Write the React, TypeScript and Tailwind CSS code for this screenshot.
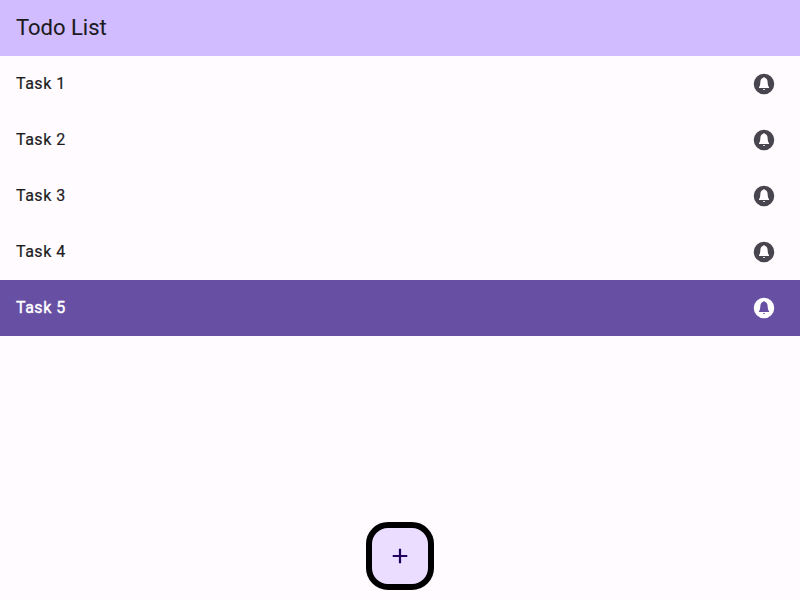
const tasks = ["Task 1", "Task 2", "Task 3", "Task 4", "Task 5"];

function BellCircle({ className }: { className: string }) {
  return (
    <svg viewBox="0 0 24 24" className={className} fill="currentColor" fillRule="evenodd">
      <path d="M12 1.75a10.25 10.25 0 1 0 0 20.5 10.25 10.25 0 0 0 0-20.5ZM12 5.300c.6 0 1 .3 1.200.7 1.500.5 2.200 1.600 2.350 3.300.15 2.100.35 3.900.75 4.900.2.300.7.4.7.9v.9H7v-.9c0-.5.5-.6.7-.9.400-1 .600-2.800.750-4.900.15-1.700.85-2.800 2.350-3.300.2-.4.600-.7 1.200-.7ZM10.900 17h2.200c-.1.600-.5 1-1.100 1s-1-.4-1.100-1Z" />
    </svg>
  );
}

export default function App() {
  return (
    <div className="flex h-screen flex-col bg-[#fffbff] font-[Roboto,sans-serif] text-[#1c1b1e]">
      <header className="flex h-14 shrink-0 items-center bg-[#d0bcff] px-4 text-[22px] leading-7">
        <h1 className="[-webkit-text-stroke:0.1px_currentColor]">Todo List</h1>
      </header>
      <ul className="flex-1">
        {tasks.map((task, i) => (
          <li
            key={task}
            className={
              i === 4
                ? "flex h-14 items-center justify-between bg-[#6750a4] pr-6 pl-4 text-white [-webkit-text-stroke:0.4px_currentColor]"
                : "flex h-14 items-center justify-between pr-6 pl-4 [-webkit-text-stroke:0.2px_currentColor]"
            }
          >
            <span className="text-base tracking-[0.5px]">{task}</span>
            <BellCircle className={i === 4 ? "size-6 text-white" : "size-6 text-[#49454e]"} />
          </li>
        ))}
      </ul>
      <footer className="flex shrink-0 justify-center pb-2.5">
        <button className="flex size-[68px] items-center justify-center rounded-[22px] border-6 border-black bg-[#eaddff] text-[#22005d]">
          <svg viewBox="0 0 24 24" className="size-6" fill="none" stroke="currentColor" strokeWidth="2.2">
            <path d="M12 4.700v14.600M4.700 12h14.600" />
          </svg>
        </button>
      </footer>
    </div>
  );
}
